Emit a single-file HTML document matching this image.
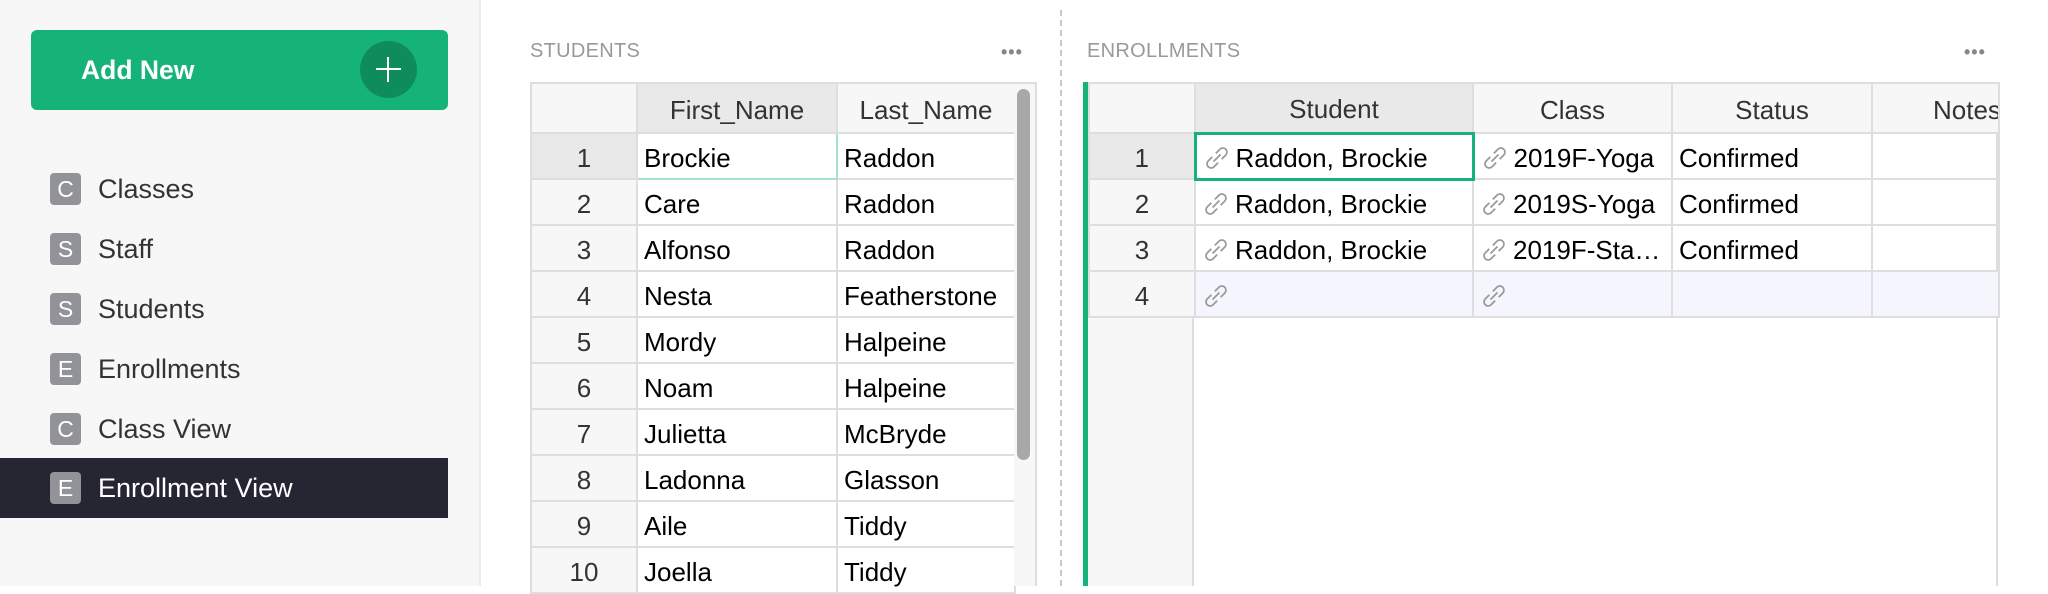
<!DOCTYPE html>
<html><head><meta charset="utf-8"><style>
*{box-sizing:border-box;margin:0;padding:0}
body{width:2048px;height:586px;overflow:hidden;background:#fff;font-family:"Liberation Sans",Arial,sans-serif;position:relative}
.side{position:absolute;left:0;top:0;width:481px;height:586px;background:#f7f7f7;border-right:2px solid #ececec}
.btn{position:absolute;left:31px;top:30px;width:417px;height:80px;background:#16b378;border-radius:6px;color:#fff;font-weight:bold;font-size:26.5px}
.btn span{position:absolute;left:50px;top:25px}
.btn i{position:absolute;left:329px;top:11px;width:57px;height:57px;border-radius:50%;background:#0f8c5c}
.btn i:before{content:"";position:absolute;left:27px;top:16px;width:2px;height:25px;background:#fff}
.btn i:after{content:"";position:absolute;left:16px;top:27px;width:25px;height:2px;background:#fff}
.nav{position:absolute;left:0;width:448px;height:60px;font-size:27px;color:#333}
.nav b{position:absolute;left:50px;top:14px;width:31px;height:32px;background:#929299;color:#fff;border-radius:4px;font-weight:normal;font-size:23px;text-align:center;line-height:32px}
.nav span{position:absolute;left:98px;top:15px}
.nav.sel{background:#262633;color:#fff}
.lbl{position:absolute;top:40px;font-size:20px;color:#999;letter-spacing:.3px}
.dots{position:absolute;top:42px;font-size:18px;color:#888;font-weight:bold;letter-spacing:1px}
table{position:absolute;border-collapse:collapse;table-layout:fixed;font-size:26px;color:#000}
td{border:2px solid #dedede;height:46px;padding:4px 6px 0;white-space:nowrap;overflow:hidden}
tr.h td{height:50px;background:#f7f7f7;color:#333;text-align:center}
td.n{background:#f7f7f7;text-align:center;color:#333}
.lk{display:inline-block;width:28px;height:28px;vertical-align:-5px;margin-right:5px}
</style></head><body>
<div class="side">
<div class="btn"><span>Add New</span><i></i></div>
<div class="nav" style="top:159px"><b>C</b><span>Classes</span></div>
<div class="nav" style="top:219px"><b>S</b><span>Staff</span></div>
<div class="nav" style="top:279px"><b>S</b><span>Students</span></div>
<div class="nav" style="top:339px"><b>E</b><span>Enrollments</span></div>
<div class="nav" style="top:399px"><b>C</b><span>Class View</span></div>
<div class="nav sel" style="top:458px"><b>E</b><span>Enrollment View</span></div>
</div>
<div class="lbl" style="left:530px">STUDENTS</div>
<div class="dots" style="left:1001px">•••</div>
<table style="left:530px;top:82px;width:484px">
<colgroup><col style="width:106px"><col style="width:200px"><col style="width:178px"></colgroup>
<tr class="h"><td></td><td style="background:#e9e9e9">First_Name</td><td>Last_Name</td></tr>
<tr><td class="n" style="background:#e9e9e9">1</td><td style="border:2px solid #a6e3cc">Brockie</td><td>Raddon</td></tr>
<tr><td class="n">2</td><td>Care</td><td>Raddon</td></tr>
<tr><td class="n">3</td><td>Alfonso</td><td>Raddon</td></tr>
<tr><td class="n">4</td><td>Nesta</td><td>Featherstone</td></tr>
<tr><td class="n">5</td><td>Mordy</td><td>Halpeine</td></tr>
<tr><td class="n">6</td><td>Noam</td><td>Halpeine</td></tr>
<tr><td class="n">7</td><td>Julietta</td><td>McBryde</td></tr>
<tr><td class="n">8</td><td>Ladonna</td><td>Glasson</td></tr>
<tr><td class="n">9</td><td>Aile</td><td>Tiddy</td></tr>
<tr><td class="n">10</td><td>Joella</td><td>Tiddy</td></tr>
</table>
<div style="position:absolute;left:1014px;top:82px;width:23px;height:504px;background:#f7f7f7;border-right:2px solid #dedede;border-top:2px solid #dedede"></div>
<div style="position:absolute;left:1017px;top:89px;width:13px;height:371px;background:#a8a8a8;border-radius:7px"></div>
<div style="position:absolute;left:1060px;top:10px;height:576px;border-left:2px dashed #c8c8c8"></div>
<div class="lbl" style="left:1087px">ENROLLMENTS</div>
<div class="dots" style="left:1964px">•••</div>
<div style="position:absolute;left:1083px;top:82px;width:5px;height:504px;background:#16b378"></div>
<div style="position:absolute;left:1088px;top:82px;width:106px;height:504px;background:#f7f7f7;border-right:2px solid #dedede"></div>
<div style="position:absolute;left:1996px;top:82px;width:2px;height:504px;background:#dedede"></div>
<table style="left:1088px;top:82px;width:910px">
<colgroup><col style="width:106px"><col style="width:278px"><col style="width:199px"><col style="width:200px"><col style="width:127px"></colgroup>
<tr class="h"><td></td><td style="background:#e9e9e9">Student</td><td>Class</td><td>Status</td><td style="text-align:left;padding-left:60px">Notes</td></tr>
<tr><td class="n" style="background:#e9e9e9">1</td><td style="border:3px solid #16b378"><svg class="lk" viewBox="0 0 24 24" fill="none" stroke="#999" stroke-width="1.5"><path d="M9 15l6-6M8 11l-3.5 3.5a3.5 3.5 0 005 5L13 16M16 13l3.5-3.5a3.5 3.5 0 00-5-5L11 8"/></svg>Raddon, Brockie</td><td><svg class="lk" viewBox="0 0 24 24" fill="none" stroke="#999" stroke-width="1.5"><path d="M9 15l6-6M8 11l-3.5 3.5a3.5 3.5 0 005 5L13 16M16 13l3.5-3.5a3.5 3.5 0 00-5-5L11 8"/></svg>2019F-Yoga</td><td>Confirmed</td><td></td></tr>
<tr><td class="n">2</td><td><svg class="lk" viewBox="0 0 24 24" fill="none" stroke="#999" stroke-width="1.5"><path d="M9 15l6-6M8 11l-3.5 3.5a3.5 3.5 0 005 5L13 16M16 13l3.5-3.5a3.5 3.5 0 00-5-5L11 8"/></svg>Raddon, Brockie</td><td><svg class="lk" viewBox="0 0 24 24" fill="none" stroke="#999" stroke-width="1.5"><path d="M9 15l6-6M8 11l-3.5 3.5a3.5 3.5 0 005 5L13 16M16 13l3.5-3.5a3.5 3.5 0 00-5-5L11 8"/></svg>2019S-Yoga</td><td>Confirmed</td><td></td></tr>
<tr><td class="n">3</td><td><svg class="lk" viewBox="0 0 24 24" fill="none" stroke="#999" stroke-width="1.5"><path d="M9 15l6-6M8 11l-3.5 3.5a3.5 3.5 0 005 5L13 16M16 13l3.5-3.5a3.5 3.5 0 00-5-5L11 8"/></svg>Raddon, Brockie</td><td><svg class="lk" viewBox="0 0 24 24" fill="none" stroke="#999" stroke-width="1.5"><path d="M9 15l6-6M8 11l-3.5 3.5a3.5 3.5 0 005 5L13 16M16 13l3.5-3.5a3.5 3.5 0 00-5-5L11 8"/></svg>2019F-Sta…</td><td>Confirmed</td><td></td></tr>
<tr style="background:#f4f5fd"><td class="n">4</td><td><svg class="lk" viewBox="0 0 24 24" fill="none" stroke="#999" stroke-width="1.5"><path d="M9 15l6-6M8 11l-3.5 3.5a3.5 3.5 0 005 5L13 16M16 13l3.5-3.5a3.5 3.5 0 00-5-5L11 8"/></svg></td><td><svg class="lk" viewBox="0 0 24 24" fill="none" stroke="#999" stroke-width="1.5"><path d="M9 15l6-6M8 11l-3.5 3.5a3.5 3.5 0 005 5L13 16M16 13l3.5-3.5a3.5 3.5 0 00-5-5L11 8"/></svg></td><td></td><td></td></tr>
</table>
</body></html>
